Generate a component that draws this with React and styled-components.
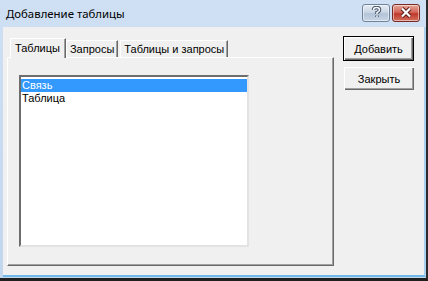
import React, { useState } from 'react';
import styled, { createGlobalStyle } from 'styled-components';

const Global = createGlobalStyle`
  html, body {
    margin: 0;
    padding: 0;
    background: #ffffff;
  }
`;

const Window = styled.div`
  width: 428px;
  height: 281px;
  box-sizing: border-box;
  display: flex;
  flex-direction: column;
  background: linear-gradient(#cfe0f4, #c2d6ee);
  border-right: 2px solid #2b2b2b;
  border-bottom: 3px solid #1e1e1e;
  font-family: "Liberation Sans", Arial, sans-serif;
`;

const TitleBar = styled.div`
  height: 27px;
  display: flex;
  align-items: center;
  padding: 0 6px 0 6px;
  flex-shrink: 0;
`;

const Title = styled.div`
  flex: 1;
  font-family: "Noto Sans", "Open Sans", sans-serif;
  font-size: 11.4px;
  color: #000;
  margin-top: -1px;
`;

const CaptionButton = styled.div`
  width: 26px;
  height: 16px;
  margin-left: 2px;
  margin-top: -2px;
  border: 1px solid ${(p) => (p.$close ? '#7a2a22' : '#71839a')};
  border-radius: 3px;
  background: ${(p) =>
    p.$close
      ? 'linear-gradient(#e6a898, #d3665a 45%, #c0392b 55%, #d2705e)'
      : 'linear-gradient(#e4ecf5, #c9d6e4 45%, #b3c3d6 55%, #c8d6e6)'};
  display: flex;
  align-items: center;
  justify-content: center;
  box-shadow: inset 0 0 0 1px rgba(255, 255, 255, 0.5);
`;

const Client = styled.div`
  flex: 1;
  margin: 0 0 1px 3px;
  background: #f0f0f0;
  border-right: 2px solid #a9d0ef;
  border-bottom: 2px solid #6fb8e8;
  display: flex;
  padding: 9px 0 0 4px;
  box-sizing: border-box;
`;

const TabControl = styled.div`
  width: 327px;
  display: flex;
  flex-direction: column;
`;

const TabRow = styled.div`
  height: 21px;
  display: flex;
  align-items: flex-end;
  padding-left: 3px;
`;

const Tab = styled.div`
  height: ${(p) => (p.$active ? 20 : 17)}px;
  box-sizing: border-box;
  padding: 0 ${(p) => (p.$active ? 5 : 3)}px 0 ${(p) => (p.$active ? 4 : 3)}px;
  margin-right: ${(p) => (p.$active ? 0 : 2)}px;
  border-top: 1px solid #ffffff;
  border-left: 1px solid #ffffff;
  border-right: 1px solid #696969;
  box-shadow: inset -1px 0 0 #a0a0a0;
  background: #f0f0f0;
  font-size: 11px;
  line-height: ${(p) => (p.$active ? 19 : 16)}px;
  color: #000;
  position: relative;
  z-index: ${(p) => (p.$active ? 2 : 1)};
  margin-bottom: ${(p) => (p.$active ? -1 : 0)}px;
  cursor: default;
`;

const Panel = styled.div`
  flex: 1;
  margin-bottom: 9px;
  border-top: 1px solid #ffffff;
  border-left: 1px solid #ffffff;
  border-right: 1px solid #696969;
  border-bottom: 1px solid #696969;
  box-shadow: inset -1px -1px 0 #a0a0a0;
  padding: 17px 0 0 11px;
`;

const ListBox = styled.div`
  width: 230px;
  height: 172px;
  box-sizing: border-box;
  background: #ffffff;
  border-top: 2px solid #6d6d6d;
  border-left: 2px solid #6d6d6d;
  border-right: 2px solid #e3e3e3;
  border-bottom: 2px solid #e3e3e3;
  padding: 2px 0 0 0;
`;

const Item = styled.div`
  height: 13px;
  line-height: 13px;
  font-size: 11px;
  padding-left: 1px;
  background: ${(p) => (p.$selected ? '#3399ff' : 'transparent')};
  color: ${(p) => (p.$selected ? '#ffffff' : '#000000')};
`;

const ButtonColumn = styled.div`
  display: flex;
  flex-direction: column;
  gap: 6px;
  margin-left: 9px;
`;

const Button = styled.div`
  width: ${(p) => (p.$default ? 71 : 70)}px;
  height: ${(p) => (p.$default ? 25 : 23)}px;
  box-sizing: border-box;
  display: flex;
  align-items: center;
  justify-content: center;
  font-size: 11px;
  color: #000;
  background: #f0f0f0;
  border: ${(p) => (p.$default ? '1px solid #000000' : 'none')};
  margin-left: ${(p) => (p.$default ? 0 : 1)}px;
  box-shadow: inset 1px 1px 0 #ffffff, inset -1px -1px 0 #696969,
    inset -2px -2px 0 #a0a0a0;
  cursor: default;
`;

const tabs = ['Таблицы', 'Запросы', 'Таблицы и запросы'];
const items = ['Связь', 'Таблица'];

export default function App() {
  const [tab, setTab] = useState(0);
  const [selected, setSelected] = useState(0);

  const help = 'M2.5 4 Q2.5 1.5 5.5 1.5 Q8.5 1.5 8.5 4 Q8.5 5.5 6 6.5 L6 8 M6 9.5 L6 11';

  return (
    <>
      <Global />
      <Window>
        <TitleBar>
          <Title>Добавление таблицы</Title>
          <CaptionButton>
            <svg width="11" height="13" viewBox="0 0 11 13">
              <path d={help} fill="none" stroke="#3b4a5e" strokeWidth="3.4" />
              <path d={help} fill="none" stroke="#f4f7fb" strokeWidth="1.6" />
            </svg>
          </CaptionButton>
          <CaptionButton $close>
            <svg width="14" height="11" viewBox="0 0 14 11">
              <path d="M3 1.5 L11 9.5 M11 1.5 L3 9.5" stroke="#5a1a14" strokeWidth="4" />
              <path d="M3 1.5 L11 9.5 M11 1.5 L3 9.5" stroke="#ffffff" strokeWidth="2.2" />
            </svg>
          </CaptionButton>
        </TitleBar>
        <Client>
          <TabControl>
            <TabRow>
              {tabs.map((t, i) => (
                <Tab key={t} $active={i === tab} onClick={() => setTab(i)}>
                  {t}
                </Tab>
              ))}
            </TabRow>
            <Panel>
              <ListBox>
                {items.map((it, i) => (
                  <Item key={it} $selected={i === selected} onClick={() => setSelected(i)}>
                    {it}
                  </Item>
                ))}
              </ListBox>
            </Panel>
          </TabControl>
          <ButtonColumn>
            <Button $default>Добавить</Button>
            <Button>Закрыть</Button>
          </ButtonColumn>
        </Client>
      </Window>
    </>
  );
}
